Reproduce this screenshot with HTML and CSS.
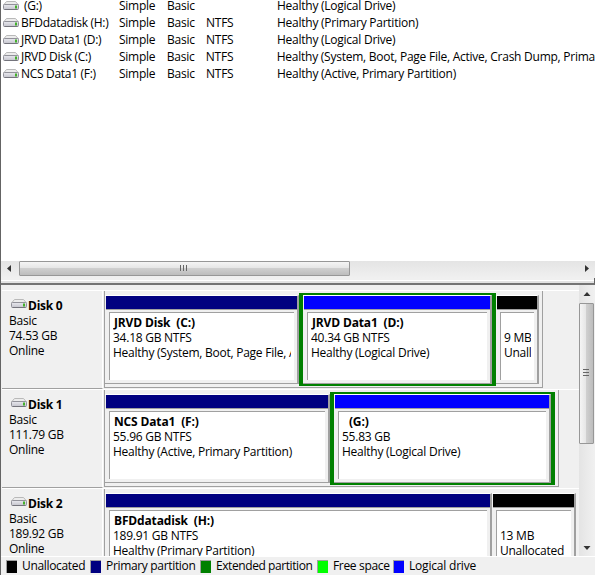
FILE: index.html
```
<!DOCTYPE html>
<html>
<head>
    <meta charset="utf-8">
    <title>Disk Management</title>
    <link rel="stylesheet" href="styles.css">
</head>
<body>
    <svg width="0" height="0" class="defs">
        <defs>
            <linearGradient id="front" x1="0" y1="0" x2="0" y2="1">
                <stop offset="0" stop-color="#e9e9ef"/>
                <stop offset="1" stop-color="#c4c4cc"/>
            </linearGradient>
            <symbol id="drive" viewBox="0 0 17 10">
                <path d="M3.5 0.5h9l3 3.5h-15z" fill="#ececec" stroke="#b9b9b9"/>
                <rect x="0.5" y="3.5" width="15" height="5" rx="1" fill="url(#front)" stroke="#92929a"/>
                <path d="M1.5 8.5h13" stroke="#74747c"/>
                <rect x="12" y="4.5" width="2" height="3" fill="#43b02a"/>
            </symbol>
        </defs>
    </svg>

    <div class="window">
        <!-- Volume list -->
        <div class="volumes">
            <div class="volume"><svg class="drive"><use href="#drive"/></svg><span class="name unnamed">(G:)</span><span class="layout">Simple</span><span class="type">Basic</span><span class="fs"></span><span class="status">Healthy (Logical Drive)</span></div>
            <div class="volume"><svg class="drive"><use href="#drive"/></svg><span class="name">BFDdatadisk (H:)</span><span class="layout">Simple</span><span class="type">Basic</span><span class="fs">NTFS</span><span class="status">Healthy (Primary Partition)</span></div>
            <div class="volume"><svg class="drive"><use href="#drive"/></svg><span class="name">JRVD Data1 (D:)</span><span class="layout">Simple</span><span class="type">Basic</span><span class="fs">NTFS</span><span class="status">Healthy (Logical Drive)</span></div>
            <div class="volume"><svg class="drive"><use href="#drive"/></svg><span class="name">JRVD Disk (C:)</span><span class="layout">Simple</span><span class="type">Basic</span><span class="fs">NTFS</span><span class="status">Healthy (System, Boot, Page File, Active, Crash Dump, Prima</span></div>
            <div class="volume"><svg class="drive"><use href="#drive"/></svg><span class="name">NCS Data1 (F:)</span><span class="layout">Simple</span><span class="type">Basic</span><span class="fs">NTFS</span><span class="status">Healthy (Active, Primary Partition)</span></div>
        </div>

        <div class="hscroll">
            <svg class="arrow" width="18" height="17"><path d="M10 4v7l-4-3.5z" fill="#333"/></svg>
            <div class="hthumb"><svg width="9" height="7"><path d="M0.5 0v6M3.5 0v6M6.5 0v6" stroke="#666"/></svg></div>
            <svg class="arrow end" width="18" height="17"><path d="M8 4v7l4-3.5z" fill="#333"/></svg>
        </div>
        <div class="splitter"></div>

        <!-- Disk map -->
        <div class="map">
            <div class="disks">
                <div class="disk">
                    <div class="label">
                        <div class="title"><svg class="drive"><use href="#drive"/></svg><b>Disk 0</b></div>
                        <div>Basic</div><div>74.53 GB</div><div>Online</div>
                    </div>
                    <div class="track">
                        <div class="part primary c-vol">
                            <div class="bar"></div>
                            <div class="info"><b>JRVD Disk&nbsp; (C:)</b><div>34.18 GB NTFS</div><div>Healthy (System, Boot, Page File, A</div></div>
                        </div>
                        <div class="extended">
                            <div class="part logical d-vol">
                                <div class="bar"></div>
                                <div class="info"><b>JRVD Data1&nbsp; (D:)</b><div>40.34 GB NTFS</div><div>Healthy (Logical Drive)</div></div>
                            </div>
                        </div>
                        <div class="part unallocated small">
                            <div class="bar"></div>
                            <div class="info"><b>&nbsp;</b><div>9 MB</div><div>Unall</div></div>
                        </div>
                    </div>
                </div>

                <div class="disk">
                    <div class="label">
                        <div class="title"><svg class="drive"><use href="#drive"/></svg><b>Disk 1</b></div>
                        <div>Basic</div><div>111.79 GB</div><div>Online</div>
                    </div>
                    <div class="track">
                        <div class="part primary f-vol">
                            <div class="bar"></div>
                            <div class="info"><b>NCS Data1&nbsp; (F:)</b><div>55.96 GB NTFS</div><div>Healthy (Active, Primary Partition)</div></div>
                        </div>
                        <div class="extended">
                            <div class="part logical g-vol">
                                <div class="bar"></div>
                                <div class="info"><b>&nbsp; (G:)</b><div>55.83 GB</div><div>Healthy (Logical Drive)</div></div>
                            </div>
                        </div>
                    </div>
                </div>

                <div class="disk">
                    <div class="label">
                        <div class="title"><svg class="drive"><use href="#drive"/></svg><b>Disk 2</b></div>
                        <div>Basic</div><div>189.92 GB</div><div>Online</div>
                    </div>
                    <div class="track last">
                        <div class="part primary h-vol">
                            <div class="bar"></div>
                            <div class="info"><b>BFDdatadisk&nbsp; (H:)</b><div>189.91 GB NTFS</div><div>Healthy (Primary Partition)</div></div>
                        </div>
                        <div class="part unallocated wide">
                            <div class="bar"></div>
                            <div class="info"><b>&nbsp;</b><div>13 MB</div><div>Unallocated</div></div>
                        </div>
                    </div>
                </div>
            </div>

            <div class="vscroll">
                <svg width="15" height="18"><path d="M4.5 11h7l-3.5-4z" fill="#333"/></svg>
                <div class="vthumb"><svg width="7" height="9"><path d="M0 0.5h6M0 3.5h6M0 6.5h6" stroke="#666"/></svg></div>
                <svg class="down" width="15" height="18"><path d="M4.5 8h7l-3.5 4z" fill="#333"/></svg>
            </div>
        </div>

        <!-- Legend -->
        <div class="legend">
            <span class="key k-unallocated"><i></i>Unallocated</span>
            <span class="key k-primary"><i></i>Primary partition</span>
            <span class="key k-extended"><i></i>Extended partition</span>
            <span class="key k-free"><i></i>Free space</span>
            <span class="key k-logical"><i></i>Logical drive</span>
        </div>
    </div>
</body>
</html>
```
FILE: styles.css
```
* {
    box-sizing: border-box;
}

body {
    margin: 0;
    font: 12px/15px "Open Sans", "Noto Sans", sans-serif;
    letter-spacing: -0.25px;
    color: #000;
    background: #f0f0f0;
    overflow: hidden;
}

.defs {
    position: absolute;
}

.window {
    width: 595px;
    height: 575px;
    border-left: 1px solid #646464;
    display: flex;
    flex-direction: column;
}

.drive {
    width: 17px;
    height: 10px;
    flex: none;
}

/* Volume list */
.volumes {
    height: 261px;
    background: #fff;
    overflow: hidden;
}

.volume {
    display: flex;
    height: 17px;
    line-height: 15px;
    padding-left: 2px;
    white-space: nowrap;
}

.volume:first-child {
    height: 15px;
    line-height: 11px;
}

.volume .drive {
    margin-top: 3px;
}

.volume:first-child .drive {
    margin-top: 1px;
}

.name { width: 99px; padding-left: 1px; letter-spacing: -0.3px; }
.unnamed { padding-left: 4px; }
.layout { width: 48px; }
.type { width: 39px; }
.fs { width: 71px; }

/* Scrollbars */
.hscroll {
    height: 17px;
    display: flex;
    background: linear-gradient(#e4e4e4, #f0f0f0);
}

.hthumb {
    width: 331px;
    height: 15px;
    border: 1px solid #979797;
    border-radius: 1px;
    background: linear-gradient(#f5f5f5, #e6e6e6 45%, #cfcfcf 50%, #bdbdbd);
    display: flex;
    align-items: center;
    justify-content: center;
}

.arrow.end {
    margin-left: auto;
}

.splitter {
    height: 7px;
    border-right: 1px solid #646464;
    border-bottom: 2px solid #747474;
    background: linear-gradient(#f0f0f0 2px, #fff 2px, #fff 3px, #e3e3e3 3px);
}

.vscroll {
    width: 15px;
    display: flex;
    flex-direction: column;
    background: linear-gradient(90deg, #e4e4e4, #f0f0f0);
}

.vthumb {
    width: 15px;
    height: 141px;
    border: 1px solid #979797;
    border-radius: 1px;
    background: linear-gradient(90deg, #f5f5f5, #e6e6e6 45%, #cfcfcf 50%, #bdbdbd);
    display: flex;
    align-items: center;
    justify-content: center;
}

.down {
    margin-top: auto;
}

/* Disk map */
.map {
    height: 271px;
    display: flex;
    overflow: hidden;
}

.disks {
    width: 578px;
    padding: 5px 0 0 1px;
}

.disk {
    display: flex;
    height: 99px;
    border-top: 1px solid #fff;
}

.label {
    width: 101px;
    height: 98px;
    padding: 7px 0 0 7px;
    border-right: 1px solid #fff;
    border-bottom: 1px solid #a0a0a0;
}

.title {
    display: flex;
}

.title .drive {
    margin: 1px 0 0 2px;
}

.track {
    height: 97px;
    margin-left: 1px;
    padding: 1px 3px 0 0;
    border: solid #a0a0a0;
    border-width: 0 1px 1px 1px;
    display: flex;
}

.track.last {
    border-right: 0;
}

.part {
    height: 89px;
    margin-top: 3px;
    padding-left: 1px;
    border-top: 1px solid #fff;
    border-right: 2px solid #a0a0a0;
    border-bottom: 1px solid #a0a0a0;
    flex: none;
}

.bar {
    height: 14px;
    border-bottom: 1px solid #a0a0a0;
}

.info {
    height: 68px;
    margin: 2px 3px 0;
    padding: 3px 3px 2px;
    background: #fff;
    border-top: 1px solid #a0a0a0;
    border-left: 1px solid #a0a0a0;
    white-space: nowrap;
}

.info b,
.info div {
    display: block;
    overflow: hidden;
}

.info b {
    letter-spacing: -0.15px;
    padding-left: 1px;
    margin-top: -1px;
}

.extended {
    height: 93px;
    margin-top: 1px;
    border: solid #008000;
    border-width: 2px 4px;
    flex: none;
}

.extended .part {
    margin-top: 0;
}

.primary .bar { background: #000080; }
.logical .bar { background: #0000ff; }
.unallocated .bar { background: #000; }

.c-vol { width: 194px; }
.d-vol { width: 189px; }
.small { width: 43px; }
.f-vol { width: 225px; }
.g-vol { width: 217px; }
.h-vol { width: 387px; }
.wide { width: 84px; }

/* Legend */
.legend {
    height: 19px;
    display: flex;
    padding-left: 5px;
    border-top: 1px solid #fff;
    line-height: 18px;
    letter-spacing: -0.33px;
}

.key {
    display: flex;
    white-space: nowrap;
}

.key i {
    width: 11px;
    height: 13px;
    margin: 3px 5px 0 0;
    border: 1px solid #a0a0a0;
    border-right: 0;
    border-bottom: 0;
}

.k-unallocated { width: 84px; }
.k-primary { width: 110px; }
.k-extended { width: 117px; letter-spacing: -0.42px; }
.k-free { width: 76px; }
.k-logical { letter-spacing: -0.2px; }

.k-unallocated i { background: #000; }
.k-primary i { background: #000080; }
.k-extended i { background: #008000; }
.k-free i { background: #00ff00; }
.k-logical i { background: #0000ff; }
```
